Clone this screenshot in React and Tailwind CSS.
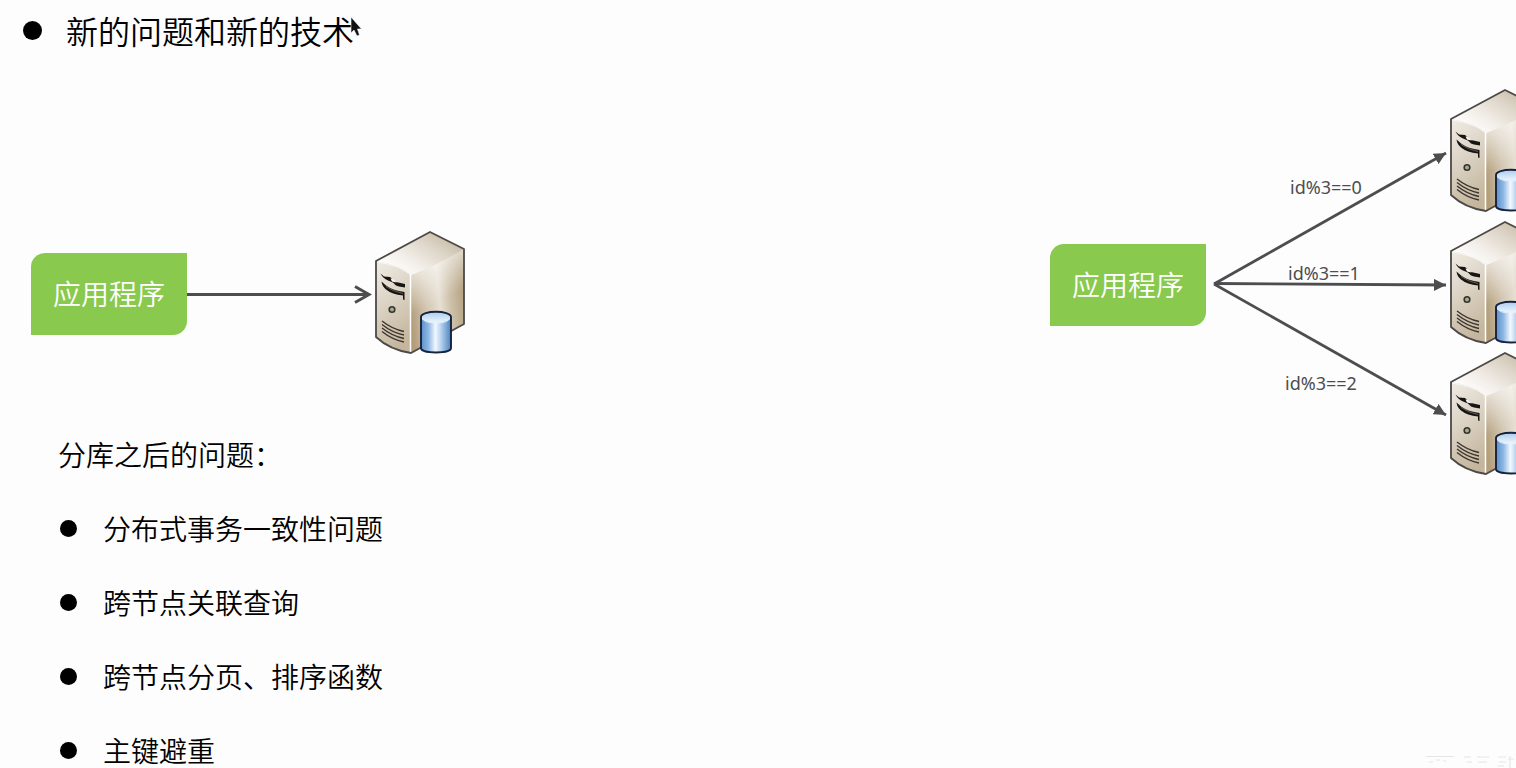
const problems = ['分布式事务一致性问题', '跨节点关联查询', '跨节点分页、排序函数', '主键避重'];

const shards = [
  { label: 'id%3==0', labelClass: 'left-[240px] top-[115px]', serverClass: 'left-[397px] top-[26px]' },
  { label: 'id%3==1', labelClass: 'left-[238px] top-[201px]', serverClass: 'left-[397px] top-[158px]' },
  { label: 'id%3==2', labelClass: 'left-[235px] top-[311px]', serverClass: 'left-[397px] top-[289px]' },
];

function ServerDefs() {
  return (
    <svg className="absolute h-0 w-0" aria-hidden="true">
      <defs>
        <linearGradient id="srv-top" x1="0.1" y1="0.8" x2="0.9" y2="0.2">
          <stop offset="0" stopColor="#ffffff" />
          <stop offset="0.35" stopColor="#f1ece6" />
          <stop offset="0.7" stopColor="#ddd5c8" />
          <stop offset="1" stopColor="#c9bda7" />
        </linearGradient>
        <linearGradient id="srv-front" x1="0.2" y1="0" x2="0.5" y2="1">
          <stop offset="0" stopColor="#eee9e1" />
          <stop offset="0.4" stopColor="#ddd5c7" />
          <stop offset="1" stopColor="#c4b59c" />
        </linearGradient>
        <linearGradient id="srv-side" x1="0" y1="0.65" x2="1" y2="0.45">
          <stop offset="0" stopColor="#b39d7a" />
          <stop offset="0.3" stopColor="#d3c7b3" />
          <stop offset="0.55" stopColor="#e6dfd3" />
          <stop offset="0.75" stopColor="#cdc0aa" />
          <stop offset="1" stopColor="#b5a382" />
        </linearGradient>
        <linearGradient id="srv-shine" x1="0" y1="0" x2="0.25" y2="1">
          <stop offset="0.1" stopColor="#fff" stopOpacity="0.8" />
          <stop offset="0.6" stopColor="#fff" stopOpacity="0" />
        </linearGradient>
        <linearGradient id="srv-disk" x1="0" y1="0" x2="1" y2="0">
          <stop offset="0" stopColor="#5b8fc9" />
          <stop offset="0.25" stopColor="#8fb8e4" />
          <stop offset="0.48" stopColor="#f2f8ff" />
          <stop offset="0.62" stopColor="#c4dcf4" />
          <stop offset="1" stopColor="#4a82c0" />
        </linearGradient>
        <linearGradient id="srv-lid" x1="0" y1="0" x2="0" y2="1">
          <stop offset="0" stopColor="#a9cbed" />
          <stop offset="1" stopColor="#edf5fd" />
        </linearGradient>
      </defs>
    </svg>
  );
}

function Server({ className }) {
  return (
    <svg className={`absolute h-[128px] w-[96px] ${className}`} viewBox="0 0 96 128" role="img" aria-label="数据库服务器">
      <path d="M39 44 L92 21 V96 L39 125 Z" fill="url(#srv-side)" />
      <path d="M39 44 L92 21 V96 L39 125 Z" fill="url(#srv-shine)" />
      <path d="M4 33 L58 4 L92 21 Q66 37 39 47 Q25 37 4 33 Z" fill="url(#srv-top)" />
      <path d="M4 33 Q26 36 39 46 V125 Q18 122 4 109 Z" fill="url(#srv-front)" />
      <path d="M5 34 Q27 37 38 46" fill="none" stroke="#faf8f4" strokeWidth="1.2" />
      <path d="M38.5 46 V125" stroke="#fff" strokeWidth="1.5" />
      <path d="M4 33 L58 4 L92 21 V96 L39 125 Q18 122 4 109 Z" fill="none" stroke="#4c4947" strokeWidth="1.8" strokeLinejoin="round" />
      <path d="M8.5 45.5 L12 48.5 L18 49 L21 51.5 L24 54 L33 56 V59.5 L27 58.5 L24 57.5 L21 54.5 L16 52.5 Q11 50.5 8.5 45.5 Z" fill="#171513" />
      <path d="M18.5 50.5 Q22 50.5 24.5 54.5 L20 53.5 Z" fill="#fbf9f5" />
      <path d="M9.5 53.5 L14 57.5 Q21 62.5 32.5 64 V72 L31 71.5 V67.5 Q20 66.5 14 61.5 Q10 58 9.5 53.5 Z" fill="#171513" />
      <path d="M14 58.5 Q21 63.5 31 65.5" fill="none" stroke="#857b6f" strokeWidth="0.7" />
      <circle cx="20" cy="81.5" r="2.8" fill="#a9aa92" stroke="#33332d" strokeWidth="1.6" />
      <path d="M10 93 Q20 101 32 103.5 M10 96.5 Q20 104.5 32 107 M10 100 Q20 108 32 110.5 M10 103.5 Q20 111.5 32 114" fill="none" stroke="#3c3630" strokeWidth="1.4" />
      <path d="M49 88 V120 Q51 125 64 125 Q77 125 79 120 V88 Z" fill="url(#srv-disk)" />
      <ellipse cx="64" cy="89" rx="15" ry="5.5" fill="url(#srv-lid)" />
      <path d="M50 90 Q52 95 64 95 Q76 95 78 90" fill="none" stroke="#e5f1fc" strokeWidth="1" />
      <path d="M49 89 C49 82 79 82 79 89 V120 C79 126 49 126 49 120 Z" fill="none" stroke="#15233c" strokeWidth="1.9" />
    </svg>
  );
}

function AppNode({ className }) {
  return (
    <div className={`absolute flex h-[82px] w-[156px] items-center justify-center rounded-tl-[14px] rounded-br-[14px] bg-[#89c94d] pb-0.5 text-[28px] leading-none text-white ${className}`}>
      应用程序
    </div>
  );
}

export default function App() {
  return (
    <div className="relative flex h-screen flex-col overflow-hidden bg-[#fdfdfd] font-['Noto_Sans_CJK_SC',sans-serif] font-[350] text-black">
      <ServerDefs />
      <header className="flex h-[60px] shrink-0 items-center gap-6 pl-[23px]">
        <span className="size-[19px] rounded-full bg-black" />
        <h1 className="relative text-[32px] leading-none">
          新的问题和新的技术
          <svg className="absolute -right-2 top-0.5 h-[22px] w-[12px]" viewBox="0 0 12 22" aria-hidden="true">
            <path d="M1 1 V17 L4 14 L7 20 L9.5 19 L7.5 13 H11.5 Z" fill="#111" stroke="#fff" strokeWidth="0.6" />
          </svg>
        </h1>
      </header>

      <main className="flex justify-between">
        <div className="w-[480px] shrink-0">
          <figure className="relative h-[357px]">
            <AppNode className="left-[31px] top-[193px]" />
            <svg className="absolute left-[187px] top-[222px] h-6 w-[186px]" viewBox="0 0 186 24" aria-hidden="true">
              <path d="M0 12.5 H181 M168 4.5 L182 12.5 L168 20.5" fill="none" stroke="#4d4d4f" strokeWidth="3" />
            </svg>
            <Server className="left-[372px] top-[168px]" />
          </figure>
          <section className="pl-[58px]">
            <h2 className="text-[28px] leading-[74px]">分库之后的问题：</h2>
            <ul className="pl-0.5">
              {problems.map((problem) => (
                <li key={problem} className="flex h-[74px] items-center gap-[26px] text-[28px] leading-none">
                  <span className="size-[17px] rounded-full bg-black" />
                  {problem}
                </li>
              ))}
            </ul>
          </section>
        </div>

        <figure className="relative h-[418px] w-[466px] shrink-0">
          <AppNode className="left-0 top-[184px]" />
          <svg className="absolute left-0 top-0 h-[418px] w-[466px]" viewBox="0 0 466 418" aria-hidden="true">
            <defs>
              <marker id="tip" markerUnits="userSpaceOnUse" markerWidth="13" markerHeight="12" refX="12" refY="6" orient="auto">
                <path d="M0 0 L12 6 L0 12 Z" fill="#4d4d4f" />
              </marker>
            </defs>
            <g fill="none" stroke="#4d4d4f" strokeWidth="2.8">
              <path d="M164 224 L396 93" markerEnd="url(#tip)" />
              <path d="M164 223.5 L396 225" markerEnd="url(#tip)" />
              <path d="M164 224 L396 355" markerEnd="url(#tip)" />
            </g>
          </svg>
          {shards.map(({ label, labelClass, serverClass }) => (
            <div key={label}>
              <span className={`absolute font-['Noto_Sans',sans-serif] text-[18px] font-normal leading-6 text-[#4d4d4f] ${labelClass}`}>{label}</span>
              <Server className={serverClass} />
            </div>
          ))}
        </figure>
      </main>

      <svg className="absolute bottom-0 right-0 h-3.5 w-[92px]" viewBox="0 0 92 14" aria-hidden="true">
        <path d="M2 2.5 H30 M5 8 H9 M12 6 H16 M19 7 H22 M40 3 H47 M43 8 H48 M53 3 H65 M54 8 H63 M74 3 H82 M75 8 H82 M74 12 H80 M84 5 H90 M86 2 V14" fill="none" stroke="#e6e6e6" strokeWidth="1.2" />
      </svg>
    </div>
  );
}
